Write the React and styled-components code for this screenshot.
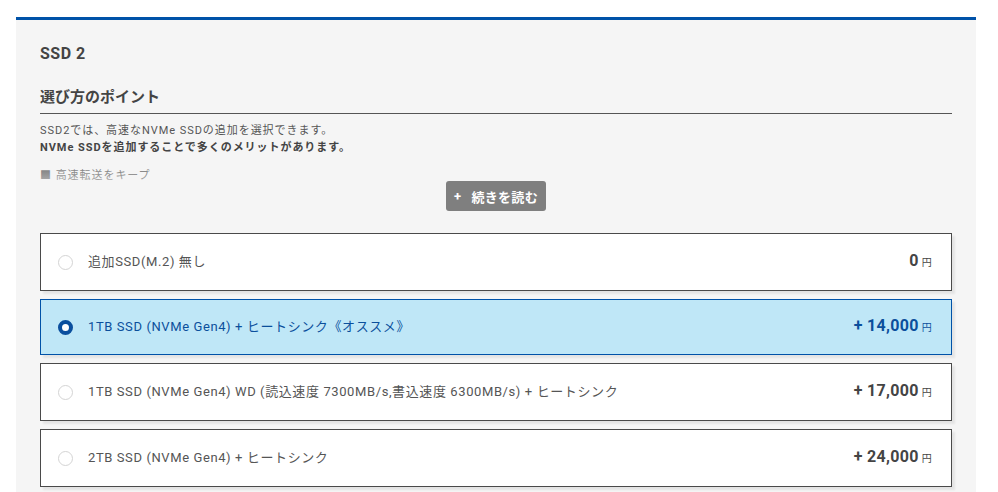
import React, { useState } from "react";
import styled, { createGlobalStyle } from "styled-components";

const GlobalStyle = createGlobalStyle`
  body {
    margin: 0;
    background: #ffffff;
    font-family: Roboto, "Noto Sans CJK JP", sans-serif;
    color: #444;
  }
`;

const Page = styled.div`
  padding: 17px 22px 0 16px;
`;

const Panel = styled.section`
  background: #f5f5f5;
  border-top: 3px solid #0052a8;
  padding: 22px 24px 40px 24px;
`;

const Title = styled.h2`
  margin: 0;
  font-size: 16px;
  line-height: 24px;
  font-weight: 700;
  color: #444;
  letter-spacing: 0.5px;
`;

const PointTitle = styled.h3`
  margin: 19px 0 0 0;
  font-size: 15px;
  line-height: 24px;
  font-weight: 700;
  color: #444;
  padding-bottom: 4px;
  border-bottom: 1px solid #555;
`;

const Collapsed = styled.div`
  position: relative;
  height: 59px;
  overflow: hidden;
  margin-top: 8px;
  font-size: 11px;
  line-height: 17px;
  color: #555;
  letter-spacing: 0.95px;
`;

const Fade = styled.div`
  position: absolute;
  left: 0;
  right: 0;
  bottom: 0;
  height: 14px;
  background: linear-gradient(rgba(245, 245, 245, 0), rgba(245, 245, 245, 0.4));
`;

const Strong = styled.p`
  margin: 0;
  font-weight: 700;
  color: #444;
`;

const Plain = styled.p`
  margin: 0;
`;

const Bullet = styled.p`
  margin: 11px 0 0 0;
  color: #7a7a7a;
`;

const MoreRow = styled.div`
  display: flex;
  justify-content: center;
`;

const MoreButton = styled.button`
  display: flex;
  align-items: center;
  gap: 10px;
  height: 30px;
  padding: 0 8px 0 8px;
  border: none;
  border-radius: 3px;
  background: #7f7f7f;
  color: #fff;
  font-family: Roboto, "Noto Sans CJK JP", sans-serif;
  font-size: 13px;
  font-weight: 700;
  letter-spacing: 0.3px;
  cursor: pointer;
`;

const Options = styled.div`
  display: flex;
  flex-direction: column;
  gap: 8px;
  margin-top: 22px;
`;

const Option = styled.label`
  display: flex;
  align-items: center;
  height: ${({ $selected }) => ($selected ? "56px" : "58px")};
  box-sizing: border-box;
  padding: 0 19px 0 17px;
  background: ${({ $selected }) => ($selected ? "#bfe7f7" : "#fff")};
  border: 1px solid ${({ $selected }) => ($selected ? "#0052a8" : "#4a4a4a")};
  box-shadow: 3px 3px 2px rgba(0, 0, 0, 0.07);
  cursor: pointer;
`;

const Radio = styled.span`
  width: 15px;
  height: 15px;
  box-sizing: border-box;
  border-radius: 50%;
  flex-shrink: 0;
  background: #fff;
  border: ${({ $selected }) =>
    $selected ? "4px solid #0a4f9e" : "1px solid #d4d4d4"};
`;

const Label = styled.span`
  flex: 1;
  margin-left: 15px;
  padding-bottom: 4px;
  font-size: 13px;
  letter-spacing: 0.6px;
  color: ${({ $selected }) => ($selected ? "#0b4f9c" : "#555")};
`;

const Price = styled.span`
  padding-bottom: 3px;
  font-size: 16px;
  font-weight: 700;
  letter-spacing: 0.3px;
  color: ${({ $selected }) => ($selected ? "#0b4f9c" : "#444")};
`;

const Yen = styled.span`
  margin-left: 3px;
  font-size: 10px;
  font-weight: 400;
`;

const options = [
  { label: "追加SSD(M.2) 無し", price: "0" },
  { label: "1TB SSD (NVMe Gen4) + ヒートシンク《オススメ》", price: "+ 14,000" },
  {
    label:
      "1TB SSD (NVMe Gen4) WD (読込速度 7300MB/s,書込速度 6300MB/s) + ヒートシンク",
    price: "+ 17,000",
  },
  { label: "2TB SSD (NVMe Gen4) + ヒートシンク", price: "+ 24,000" },
];

const App = () => {
  const [selected, setSelected] = useState(1);

  return (
    <Page>
      <GlobalStyle />
      <Panel>
        <Title>SSD 2</Title>
        <PointTitle>選び方のポイント</PointTitle>
        <Collapsed>
          <Plain>SSD2では、高速なNVMe SSDの追加を選択できます。</Plain>
          <Strong>NVMe SSDを追加することで多くのメリットがあります。</Strong>
          <Bullet>■ 高速転送をキープ</Bullet>
          <Fade />
        </Collapsed>
        <MoreRow>
          <MoreButton>
            <span>+</span>
            <span>続きを読む</span>
          </MoreButton>
        </MoreRow>
        <Options>
          {options.map((o, i) => (
            <Option
              key={o.label}
              $selected={selected === i}
              onClick={() => setSelected(i)}
            >
              <Radio $selected={selected === i} />
              <Label $selected={selected === i}>{o.label}</Label>
              <Price $selected={selected === i}>
                {o.price}
                <Yen>円</Yen>
              </Price>
            </Option>
          ))}
        </Options>
      </Panel>
    </Page>
  );
};

export default App;
